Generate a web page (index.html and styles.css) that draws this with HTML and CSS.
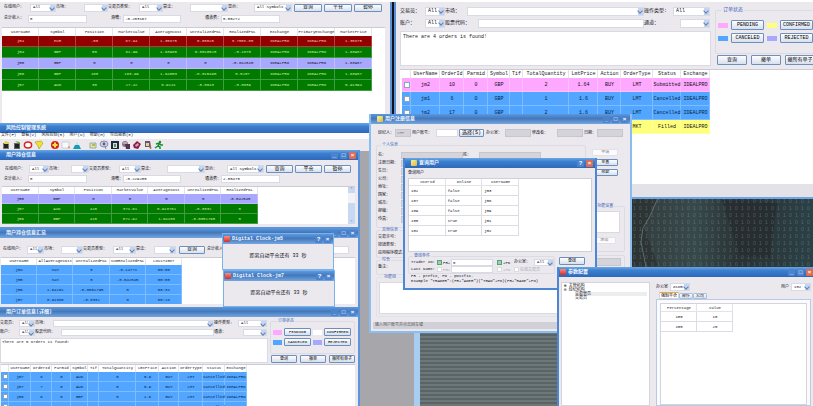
FILE: index.html
```html
<!DOCTYPE html>
<html lang="zh-CN">
<head>
<meta charset="utf-8">
<title>风险控制管理系统</title>
<link rel="stylesheet" href="styles.css">
</head>
<body>
<main class="desktop">
  <svg class="wallpaper" aria-hidden="true">
    <defs>
      <pattern id="bits" width="24" height="14" patternUnits="userSpaceOnUse">
        <g fill="#8fa5a5" opacity=".38" font-family="Liberation Sans" font-size="5">
          <text x="1" y="5">0</text><text x="7" y="5">1</text><text x="13" y="5">0</text><text x="19" y="5">1</text>
          <text x="1" y="12">1</text><text x="7" y="12">0</text><text x="13" y="12">1</text><text x="19" y="12">0</text>
        </g>
      </pattern>
      <linearGradient id="deep" x2="1"><stop offset="0" stop-color="#343c3d"/><stop offset=".35" stop-color="#37494b"/><stop offset=".6" stop-color="#293235"/><stop offset="1" stop-color="#2b4146"/></linearGradient>
    </defs>
    <rect width="100%" height="100%" fill="url(#deep)"/>
    <path d="M90 2 L145 5 L138 60 L108 58 Z" fill="#262b2e" opacity=".7"/>
    <path d="M0 0H25L12 30L26 68H0Z" fill="#2b3031" opacity=".7"/>
    <path d="M26 0L18 18L11 30L9 44L14 69" fill="none" stroke="#5d6a6b" stroke-width="1"/>
    <rect width="100%" height="100%" fill="url(#bits)"/>
  </svg>
  <div class="scanlines"></div>

  <section class="win monitor">
    <div class="body">
      <div class="bar monitor-bar">
        <label for="a1">在线用户：</label><span class="sel"><select id="a1"><option>All</option></select></span>
        <label for="a2">市场：</label><span class="sel"><select id="a2"><option></option></select></span>
        <label for="a3">交易员类型：</label><span class="sel"><select id="a3"><option>All</option></select></span>
        <label for="a4">算法：</label><span class="sel"><select id="a4"><option></option></select></span>
        <label for="a5">显示：</label><span class="sel"><select id="a5"><option>All Symbols</option></select></span>
        <button>查询</button><button>平仓</button><button>暂停</button>
      </div>
      <div class="bar sums">
        <label for="a6">总计收入：</label><input id="a6" value="0">
        <label for="a7">滑嘴：</label><input id="a7" value="-0.203167">
        <label for="a8">通道费：</label><input id="a8" value="5.55272">
      </div>
      <div class="sheet">
        <table class="grid even10">
          <thead><tr><th>UserName</th><th>Symbol</th><th>Position</th><th>MarketValue</th><th>AverageCost</th><th>UnrealizedPNL</th><th>RealizedPNL</th><th>Exchange</th><th>PrimaryExchange</th><th>MarketPrice</th></tr></thead>
          <tbody>
            <tr class="red"><td>jm4</td><td>EUR</td><td>-50</td><td>67.94</td><td>1.35875</td><td>0.00025</td><td>3.755e-05</td><td>IDEALPRO</td><td>IDEALPRO</td><td>1.35875</td></tr>
            <tr class="green"><td>jm4</td><td>GBP</td><td>50</td><td>81.99</td><td>1.63985</td><td>0.0010025</td><td>-0.1875</td><td>IDEALPRO</td><td>IDEALPRO</td><td>1.63987</td></tr>
            <tr class="lilac"><td>jm5</td><td>GBP</td><td>0</td><td>0</td><td>0</td><td>0</td><td>-0.042545</td><td>IDEALPRO</td><td>IDEALPRO</td><td>1.63987</td></tr>
            <tr class="green"><td>jm6</td><td>GBP</td><td>100</td><td>163.99</td><td>1.64003</td><td>-0.015495</td><td>0.0207</td><td>IDEALPRO</td><td>IDEALPRO</td><td>1.63987</td></tr>
            <tr class="green"><td>jm7</td><td>AUD</td><td>30</td><td>27.42</td><td>0.9141</td><td>-0.0043</td><td>-0.0039</td><td>IDEALPRO</td><td>IDEALPRO</td><td>0.91394</td></tr>
          </tbody>
        </table>
      </div>
    </div>
  </section>

  <section class="win orders-top">
    <div class="orders-head">
      <div class="orders-form">
        <div class="bar f1"><label for="b1">交易员：</label><span class="sel"><select id="b1"><option>All</option></select></span><label for="b2">市场：</label><span class="sel"><select id="b2"><option></option></select></span><label for="b3">操作类型:</label><span class="sel"><select id="b3"><option>All</option></select></span></div>
        <div class="bar f2"><label for="b4">账户：</label><span class="sel"><select id="b4"><option>All</option></select></span><label for="b5">股票代码：</label><input id="b5"><label for="b6">通道：</label><span class="sel"><select id="b6"><option></option></select></span></div>
        <textarea aria-label="消息" readonly>There are 4 orders is found!</textarea>
      </div>
      <div class="orders-side">
        <fieldset class="status"><legend>订单状态</legend>
          <div class="keys"><i class="pink"></i><button>PENDING</button><i class="yellow"></i><button>CONFIRMED</button><i class="blue"></i><button>CANCELED</button><i class="lilac"></i><button>REJECTED</button></div>
        </fieldset>
        <div class="acts"><button>查询</button><button>撤单</button><button>撤所有单子</button></div>
      </div>
    </div>
    <div class="sheet">
      <table class="grid orders">
        <colgroup><col class="c1"><col class="c2"><col class="c3"><col class="c4"><col class="c5"><col class="c6"><col class="c7"><col class="c8"><col class="c9"><col class="c10"><col class="c11"><col class="c12"></colgroup>
        <thead><tr><th></th><th>UserName</th><th>OrderId</th><th>Parmid</th><th>Symbol</th><th>Tif</th><th>TotalQuantity</th><th>LmtPrice</th><th>Action</th><th>OrderType</th><th>Status</th><th>Exchange</th></tr></thead>
        <tbody>
          <tr class="pink"><td><input type="checkbox" aria-label="订单 10"></td><td>jm2</td><td>10</td><td>0</td><td>GBP</td><td></td><td>2</td><td>1.64</td><td>BUY</td><td>LMT</td><td>Submitted</td><td>IDEALPRO</td></tr>
          <tr class="blue"><td><input type="checkbox" aria-label="订单 6"></td><td>jm1</td><td>6</td><td>0</td><td>GBP</td><td></td><td>1</td><td>1.6</td><td>BUY</td><td>LMT</td><td>Cancelled</td><td>IDEALPRO</td></tr>
          <tr class="blue"><td><input type="checkbox" aria-label="订单 17"></td><td>jm2</td><td>17</td><td>0</td><td>GBP</td><td></td><td>2</td><td>1.6</td><td>BUY</td><td>LMT</td><td>Cancelled</td><td>IDEALPRO</td></tr>
          <tr class="yellow"><td><input type="checkbox" aria-label="订单 9"></td><td>jm1</td><td>9</td><td>0</td><td>GBP</td><td></td><td>1</td><td>0</td><td>BUY</td><td>MKT</td><td>Filled</td><td>IDEALPRO</td></tr>
        </tbody>
      </table>
    </div>
    <div class="footer"></div>
  </section>

  <section class="win app">
    <h1 class="title">风险控制管理系统</h1>
    <nav class="menu"><a href="#">文件(F)</a><a href="#">查看(V)</a><a href="#">风险控制(R)</a><a href="#">用户(U)</a><a href="#">帮助(H)</a><a href="#">导出报表(E)</a></nav>
    <div class="tools">
      <svg viewBox="0 0 10 10"><path d="M2 3h6v6H2z" fill="#777"/><path d="M3 4h4v4H3z" fill="#222"/><path d="M4 1l4 1v2H3z" fill="#e0cf56"/></svg>
      <svg viewBox="0 0 10 10"><path d="M2 3h6v6H2z" fill="#666"/><path d="M3 4h4v4H3z" fill="#222"/><path d="M3 1l5 1-1 2z" fill="#69b52b"/></svg>
      <svg viewBox="0 0 10 10"><ellipse cx="5" cy="5" rx="3.6" ry="3" fill="#fff" stroke="#e32020" stroke-width="1.5"/></svg>
      <svg viewBox="0 0 10 10"><path d="M1 2l6-1 2 2-4 6-1-3z" fill="#f4e524" stroke="#9c9630" stroke-width=".6"/></svg>
      <svg class="gap" viewBox="0 0 10 10"><circle cx="5" cy="5" r="4" fill="#d52218"/><path d="M5 2.5v5M2.5 5h5" stroke="#ffe34d" stroke-width="2"/></svg>
      <svg viewBox="0 0 10 10"><path d="M1 2h7v6H1z" fill="#fafafa" stroke="#b9b9c5" stroke-width=".6"/><path d="M7 6l2 1-1 2z" fill="#ce7b48"/></svg>
      <svg viewBox="0 0 10 10"><path d="M1 9l2-4h4l2 4z" fill="#159ab8"/><path d="M3 5l2-3 2 3z" fill="#bfe3ee"/></svg>
      <svg class="gap" viewBox="0 0 10 10"><path d="M2 3h6v5H2z" fill="#efe48b" stroke="#829bb0" stroke-width=".8"/><path d="M4 5h3" stroke="#658f4d"/></svg>
      <svg viewBox="0 0 10 10"><ellipse cx="5" cy="4" rx="4" ry="3" fill="#cad2ed" stroke="#767c9a" stroke-width=".8"/><circle cx="5" cy="4" r="1.4" fill="#575d8b"/><path d="M6 6l1 3" stroke="#888"/></svg>
      <svg viewBox="0 0 10 10"><path d="M1 1h8v8H1z" fill="#1c2849"/><path d="M3 3h4v5H3z" fill="#d8e0b8"/><path d="M4 4h2v3H4z" fill="#6b8a74"/></svg>
      <svg viewBox="0 0 10 10"><circle cx="4" cy="4" r="3" fill="#8d7086"/><path d="M4 4l5 0v5H5z" fill="#513453"/><path d="M2 3h4" stroke="#e3d9e2"/></svg>
      <svg viewBox="0 0 10 10"><path d="M1 5l4-4 4 3-3 5-4-1z" fill="#8b1c3f"/><path d="M3 5l3-2 1 2-3 2z" fill="#d7a0c8"/></svg>
      <svg viewBox="0 0 10 10"><path d="M2 1h5l1 6H2z" fill="#675280"/><path d="M3 3h3v3H3z" fill="#e8d769"/><path d="M6 6l3 2-2 1z" fill="#b3602a"/></svg>
      <svg viewBox="0 0 10 10"><circle cx="6" cy="2" r="1.2" fill="#16902b"/><path d="M2 4l3-1 2 2h2M5 4L4 6l2 1v2M4 6L1 8" fill="none" stroke="#16902b" stroke-width="1.5"/></svg>
    </div>
    <div class="mdi"></div>
  </section>

  <section class="win position">
    <h2 class="title"><span>用户持仓信息</span><span class="ctl"><button aria-label="最小化">_</button><button aria-label="最大化">□</button><button class="x" aria-label="关闭">×</button></span></h2>
    <div class="body">
      <div class="bar position-bar">
        <label for="c1">在线用户：</label><span class="sel"><select id="c1"><option>All</option></select></span>
        <label for="c2">市场：</label><span class="sel"><select id="c2"><option></option></select></span>
        <label for="c3">交易员类型：</label><span class="sel"><select id="c3"><option>All</option></select></span>
        <label for="c4">算法：</label><span class="sel"><select id="c4"><option></option></select></span>
        <label for="c5">显示：</label><span class="sel"><select id="c5"><option>All Symbols</option></select></span>
        <button>查询</button><button>平仓</button><button>暂停</button>
      </div>
      <div class="bar sums">
        <label for="c6">总计收入：</label><input id="c6" value="0">
        <label for="c7">滑嘴：</label><input id="c7" value="-0.229255">
        <label for="c8">通道费：</label><input id="c8" value="2.55475">
      </div>
      <div class="sheet scrolled">
        <table class="grid even7">
          <thead><tr><th>UserName</th><th>Symbol</th><th>Position</th><th>MarketValue</th><th>AverageCost</th><th>UnrealizedPNL</th><th>RealizedPNL</th></tr></thead>
          <tbody>
            <tr class="lilac"><td>jm5</td><td>GBP</td><td>0</td><td>0</td><td>0</td><td>0</td><td>-0.042545</td></tr>
            <tr class="green"><td>jm7</td><td>AUD</td><td>410</td><td>374.61</td><td>0.913761</td><td>-0.0332</td><td>0</td></tr>
            <tr class="green"><td>jm6</td><td>GBP</td><td>410</td><td>672.92</td><td>1.64103</td><td>-0.0052795</td><td>0</td></tr>
          </tbody>
        </table>
        <div class="scrollbar"><b>⌃</b><i></i><b>⌄</b></div>
      </div>
    </div>
  </section>

  <section class="win summary">
    <h2 class="title"><span>用户持仓信息汇总</span><span class="ctl"><button aria-label="最小化">_</button><button aria-label="最大化">□</button><button aria-label="关闭">×</button></span></h2>
    <div class="body">
      <div class="bar summary-bar">
        <label for="d1">在线用户：</label><span class="sel"><select id="d1"><option>All</option></select></span>
        <label for="d2">市场：</label><span class="sel"><select id="d2"><option></option></select></span>
        <label for="d3">交易员类型：</label><span class="sel"><select id="d3"><option>All</option></select></span>
        <label for="d4">算法：</label><span class="sel"><select id="d4"><option></option></select></span>
        <button>查询</button><label for="d5">总计收入：</label><input id="d5">
      </div>
      <div class="sheet">
        <table class="grid even5">
          <thead><tr><th>UserName</th><th>AllAverageCost</th><th>UnrealizedPNL</th><th>SumRealizedPNL</th><th>LossTimer</th></tr></thead>
          <tbody>
            <tr class="blue"><td>jm4</td><td>nan</td><td>0</td><td>-0.14771</td><td>00:00</td></tr>
            <tr class="blue"><td>jm5</td><td>nan</td><td>0</td><td>-0.042545</td><td>00:00</td></tr>
            <tr class="blue"><td>jm6</td><td>1.64102</td><td>-0.0052795</td><td>0</td><td>00:34</td></tr>
            <tr class="blue"><td>jm7</td><td>0.91366</td><td>-0.0332</td><td>0</td><td>00:28</td></tr>
          </tbody>
        </table>
      </div>
    </div>
  </section>

  <section class="win clock clock-a">
    <h2 class="title"><i class="badge"></i><span>Digital Clock-jm5</span><span class="ctl"><button aria-label="帮助">?</button><button aria-label="关闭">×</button></span></h2>
    <p>距离自动平仓还有 33 秒</p>
  </section>
  <section class="win clock clock-b">
    <h2 class="title"><i class="badge"></i><span>Digital Clock-jm7</span><span class="ctl"><button aria-label="帮助">?</button><button aria-label="关闭">×</button></span></h2>
    <p>距离自动平仓还有 33 秒</p>
  </section>

  <section class="win orders-low">
    <h2 class="title"><span>用户订单信息(详细)</span><span class="ctl"><button aria-label="最小化">_</button><button aria-label="最大化">□</button><button aria-label="关闭">×</button></span></h2>
    <div class="orders-head">
      <div class="orders-form">
        <div class="bar f1"><label for="e1">交易员：</label><span class="sel"><select id="e1"><option>All</option></select></span><label for="e2">市场：</label><span class="sel"><select id="e2"><option></option></select></span><label for="e3">操作类型:</label><span class="sel"><select id="e3"><option>All</option></select></span></div>
        <div class="bar f2"><label for="e4">账户：</label><span class="sel"><select id="e4"><option>All</option></select></span><label for="e5">股票代码：</label><input id="e5"><label for="e6">通道：</label><span class="sel"><select id="e6"><option></option></select></span></div>
        <textarea aria-label="消息" readonly>There are 5 orders is found!</textarea>
      </div>
      <div class="orders-side">
        <fieldset class="status"><legend>订单状态</legend>
          <div class="keys"><i class="pink"></i><button>PENDING</button><i class="white"></i><button>CONFIRMED</button><i class="blue"></i><button>CANCELED</button><i class="lilac"></i><button>REJECTED</button></div>
        </fieldset>
        <div class="acts"><button>查询</button><button>撤单</button><button>撤所有单子</button></div>
      </div>
    </div>
    <div class="sheet">
      <table class="grid orders">
        <colgroup><col class="c1"><col class="c2"><col class="c3"><col class="c4"><col class="c5"><col class="c6"><col class="c7"><col class="c8"><col class="c9"><col class="c10"><col class="c11"><col class="c12"></colgroup>
        <thead><tr><th></th><th>UserName</th><th>OrderId</th><th>Parmid</th><th>Symbol</th><th>Tif</th><th>TotalQuantity</th><th>LmtPrice</th><th>Action</th><th>OrderType</th><th>Status</th><th>Exchange</th></tr></thead>
        <tbody>
          <tr class="blue"><td><input type="checkbox" aria-label="订单 8"></td><td>jm7</td><td>8</td><td>0</td><td>AUD</td><td></td><td>5</td><td>0.9</td><td>BUY</td><td>LMT</td><td>Cancelled</td><td>IDEALPRO</td></tr>
          <tr class="blue"><td><input type="checkbox" aria-label="订单 7"></td><td>jm7</td><td>7</td><td>0</td><td>AUD</td><td></td><td>5</td><td>0.9</td><td>BUY</td><td>LMT</td><td>Cancelled</td><td>IDEALPRO</td></tr>
          <tr class="blue"><td><input type="checkbox" aria-label="订单 6"></td><td>jm6</td><td>6</td><td>0</td><td>GBP</td><td></td><td>5</td><td>1.6</td><td>BUY</td><td>LMT</td><td>Cancelled</td><td>IDEALPRO</td></tr>
          <tr class="blue"><td><input type="checkbox" aria-label="订单 5"></td><td>jm5</td><td>5</td><td>0</td><td>GBP</td><td></td><td>5</td><td>1.6</td><td>BUY</td><td>LMT</td><td>Cancelled</td><td>IDEALPRO</td></tr>
        </tbody>
      </table>
    </div>
  </section>

  <section class="win register">
    <h2 class="title"><i class="badge gold"></i><span>用户注册信息</span><span class="ctl"><button aria-label="最小化">_</button><button aria-label="最大化">□</button><button aria-label="关闭">×</button></span></h2>
    <div class="bar register-bar">
      <label for="g1">经纪人：</label><input id="g1" value="SHF" disabled><label for="g2">用户账号：</label><input id="g2"><button>选择(S)</button><label for="g3">办公室：</label><input id="g3" disabled><label for="g4">修改者：</label><input id="g4" disabled><label for="g5">日期：</label><input id="g5" disabled>
    </div>
    <div class="register-main">
      <div class="register-form">
        <fieldset><legend>个人信息</legend>
          <div class="person">
            <label for="h1">名：</label><input id="h1" disabled><label for="h2">姓：</label><input id="h2" disabled>
            <label for="h3">注册日期：</label><input id="h3" class="span" disabled>
            <label for="h4">生日：</label><input id="h4" class="span" disabled>
            <label for="h5">公司：</label><input id="h5" class="span" disabled>
            <label for="h6">地址：</label><input id="h6" class="span" disabled>
            <label for="h7">国家：</label><input id="h7" class="span" disabled>
            <label for="h8">城市：</label><input id="h8" class="span" disabled>
            <label for="h9">邮编：</label><input id="h9" class="span" disabled>
            <label for="h10">传真：</label><input id="h10" class="span" disabled>
          </div>
        </fieldset>
        <fieldset><legend>其他信息</legend><p>交易许可：</p><p>按钮类型：</p><p>应用程序模式：</p></fieldset>
        <fieldset class="general"><legend>综合</legend><p>备注：</p></fieldset>
      </div>
      <div class="register-side">
        <button disabled>申请</button><button>重置</button><button>帮助</button>
        <fieldset><legend>功能设置</legend><div class="well"></div><button disabled>添加</button></fieldset>
        <fieldset class="tail"><input aria-label="数值" disabled></fieldset>
      </div>
    </div>
    <fieldset class="groups"><legend>功能组</legend><div class="well"></div></fieldset>
    <footer>输入用户账号并点击回车键</footer>
  </section>

  <section class="win query">
    <h2 class="title"><i class="badge gold"></i><span>查询用户</span><span class="ctl"><button aria-label="帮助">?</button><button class="x" aria-label="关闭">×</button></span></h2>
    <p class="caption">查询用户</p>
    <div class="sheet">
      <table class="grid plain">
        <thead><tr><th>userId</th><th>online</th><th>userName</th></tr></thead>
        <tbody>
          <tr><td>102</td><td>false</td><td>jm3</td></tr>
          <tr><td>107</td><td>false</td><td>jm8</td></tr>
          <tr><td>109</td><td>false</td><td>jm9</td></tr>
          <tr><td>100</td><td>true</td><td>jm1</td></tr>
          <tr><td>101</td><td>true</td><td>jm2</td></tr>
        </tbody>
      </table>
    </div>
    <div class="query-foot">
      <fieldset><legend>查找条件</legend>
        <div class="criteria">
          <label for="k1">Trader ID:</label><label class="tick"><input type="checkbox" checked>PR+</label><input id="k1" value="0"><label class="tick"><input type="checkbox" checked>+PO</label><label for="k2">办公室：</label><span class="sel"><select id="k2"><option>All</option></select></span>
          <label for="k3">Last Name:</label><label class="tick off"><input type="checkbox" disabled>PR+</label><input id="k3"><label class="tick off"><input type="checkbox" disabled>+PO</label><label class="tick off wide"><input type="checkbox" disabled>在线交易员</label>
        </div>
      </fieldset>
      <button>查找</button>
    </div>
    <p class="hint">PR - prefix, PO - postfix.<br>Example "TRADER":(PR+"ADER")("TRAD"+PO)(PR+"RADE"+PO)</p>
  </section>

  <section class="win config">
    <h2 class="title"><i class="badge"></i><span>参数配置</span><span class="ctl"><button aria-label="最小化">_</button><button aria-label="最大化">□</button><button class="x" aria-label="关闭">×</button></span></h2>
    <div class="config-main">
      <ul class="tree"><li>⊞ 主管机构</li><li>⊟ 经纪机构</li><li class="leaf on">交易管员</li><li class="leaf">交易员</li></ul>
      <div class="config-side">
        <div class="config-bar"><label for="m1">办公室</label><span class="sel"><select id="m1"><option>Zcom</option></select></span><label class="right" for="m2">用户</label><span class="sel"><select id="m2"><option>102</option></select></span></div>
        <div class="tabs"><button class="on">强制平仓</button><button>邮件</button><button>公司</button></div>
        <div class="pane"><div class="sheet">
          <table class="grid plain values">
            <thead><tr><th>Percentage</th><th>Value</th></tr></thead>
            <tbody><tr><td>100</td><td>10</td></tr><tr><td>150</td><td>20</td></tr></tbody>
          </table>
        </div></div>
      </div>
    </div>
  </section>
</main>
</body>
</html>
```
FILE: styles.css
```css
* { box-sizing: border-box; }
html, body { height: 100%; margin: 0; background: #fff; }
body, button, input, select, textarea {
  font: 4px/5px "Liberation Mono", "Noto Sans CJK SC", monospace;
  color: #101018;
}
h1, h2, p, ul, fieldset { margin: 0; padding: 0; }
.desktop { position: relative; width: 100%; height: 100vh; overflow: hidden; white-space: nowrap; }

/* Controls */
button, input, select, textarea { margin: 0; padding: 0; border-radius: 0; min-width: 0; }
button {
  height: 8px; overflow: hidden; text-align: center;
  border: 1px solid #6d8fba; border-radius: 1px;
  background: linear-gradient(#fdfdff, #d6e0ef); color: #000;
}
.bar button, .acts button { font-size: 5px; }
button:disabled { background: #fbfbfd; border-color: #e2e1e8; color: #777; }
input, select, textarea { border: 1px solid #d9dbe4; background: #fff; }
input { height: 8px; padding: 0 1px; width: 100%; }
input:disabled { background: #d5d4da; border-color: #c6c6ce; color: #888; }
input[type="checkbox"] {
  appearance: none; display: inline-block; width: 6px; height: 6px; padding: 0;
  border: 1px solid #8ca5bd; background: #fff; vertical-align: middle;
}
input[type="checkbox"]:checked { border-color: #5da178; background: #9bd2ac; }
input[type="checkbox"]:disabled { border-color: #dcdce3; }
.sel { position: relative; display: block; height: 8px; min-width: 0; }
.sel select { appearance: none; display: block; width: 100%; height: 100%; padding: 0 6px 0 2px; }
.sel::after {
  content: ""; position: absolute; top: 1px; right: 1px; bottom: 1px; width: 5px;
  background: #c2d5f2;
}
.sel::before {
  content: ""; position: absolute; z-index: 1; top: 2px; right: 2px; width: 3px; height: 3px;
  border: solid #6681ab; border-width: 0 1px 1px 0; transform: rotate(45deg);
}
textarea { display: block; width: 100%; resize: none; overflow: hidden; padding: 1px; color: #222; }
fieldset { border: 1px solid #dcdae3; border-radius: 2px; min-width: 0; }
legend { margin-left: 4px; padding: 0 1px; color: #3c64b8; line-height: 5px; }
.bar { display: grid; align-items: center; height: 11px; }

/* Windows */
.win { position: absolute; display: flex; flex-direction: column; overflow: hidden; background: #ebe9ee; }
.title {
  display: flex; align-items: center; gap: 2px; flex: none; height: 10px; padding: 0 2px 0 6px;
  font-size: 5px; line-height: 8px; font-weight: bold; color: #f2f7ff;
  background: linear-gradient(#6aa7e4, #3b7fcf 35%, #2d67ba);
}
.ctl { display: flex; gap: 2px; margin-left: auto; }
.ctl button { width: 7px; height: 7px; border: 0; background: #4c83cf; color: #fff; font: bold 6px/6px "Liberation Sans", sans-serif; }
.ctl .x { background: #df6c52; }
.badge { width: 6px; height: 6px; border-radius: 1px; background: linear-gradient(#ff8a80, #cf2f2a); }
.badge.gold { background: linear-gradient(135deg, #fff39a, #d9b73b); }
.body { display: flex; flex-direction: column; flex: 1; min-height: 0; }
.sheet { flex: 1; min-height: 0; background: #fff; border-top: 1px solid #cccbd3; overflow: hidden; }

/* Tables */
.grid { border-spacing: 0; table-layout: fixed; text-align: center; }
.grid th, .grid td { padding: 0; }
.grid th { font-weight: normal; color: #222; box-shadow: inset -1px 0 #e6e6ea; }
.grid td { box-shadow: inset -1px -1px rgba(255, 255, 255, .25); }
.red { background: #940000; color: #f8c4ba; }
.green { background: #007b00; color: #cdf09a; }
.lilac { background: #a9a8ff; }
.blue { background: #52a6ff; color: #06244a; }
.pink { background: #ffa8ff; }
.yellow { background: #ffff7e; }
.white { background: #fff; }

/* Wallpaper */
.wallpaper { position: absolute; left: 632px; right: 0; top: 198px; width: calc(100% - 632px); height: 70px; }
.scanlines {
  position: absolute; left: 420px; top: 332px; width: 138px; bottom: 0;
  background: repeating-linear-gradient(#6d7778 0 2px, #596466 2px 4px);
}

/* Monitor */
.monitor { left: 0; top: 2px; width: 392px; height: 122px; border-right: 2px solid #5b8fd6; }
.monitor-bar { grid-template-columns: 26px 26px 28px 24px 31px 24px 27px 38px 26px 38px 30px 30px 30px; padding-left: 4px; }
.monitor-bar button, .position-bar button { margin-left: 2px; }
.sums { grid-template-columns: 24px 59px 36px 58px 40px 59px; padding-left: 4px; }
.sums label:nth-of-type(n+2) { text-align: right; }
.monitor .sums { margin-bottom: 3px; }
.monitor .sheet { margin: 0 5px 0 2px; }
.monitor thead tr { height: 8px; }
.monitor tbody tr { height: 11px; }
.even10 { width: 370px; }

/* Orders */
.orders-head { display: flex; flex: none; }
.orders-form { flex: none; }
.orders-side { flex: none; }
.status .keys { display: grid; align-items: center; }
.acts { display: grid; }
.orders-top {
  left: 394px; right: 0; top: 2px; height: 197px; padding-left: 4px;
  border-left: 2px solid #5b8fd6; border-bottom: 2px solid #6ba6e6;
  box-shadow: -2px 0 #10131c;
}
.orders-top label, .orders-top legend, .orders-top .grid, .orders-top textarea,
.orders-top select, .orders-top button { font-size: 5px; line-height: 6px; }
.orders-top .orders-head { height: 67px; padding-top: 3px; }
.orders-top .orders-form { width: 311px; }
.orders-top .bar { height: 12px; }
.orders-top .sel, .orders-top .bar input { height: 9px; }
.orders-top .f1 { grid-template-columns: 25px 20px 22px 177px 29px 37px; }
.orders-top .f2 { grid-template-columns: 25px 20px 33px 166px 36px 30px; }
.orders-top textarea { height: 35px; margin-top: 2px; padding: 2px; }
.orders-top .orders-side { width: 104px; padding: 2px 0 0 4px; }
.orders-top .status { height: 47px; padding: 7px 2px 0; }
.orders-top .keys { grid-template-columns: 10px 33px 10px 33px; gap: 3px; }
.orders-top .keys button, .orders-top .acts button { height: 10px; }
.keys i { height: 5px; }
.orders-top .acts { grid-template-columns: repeat(3, 30px); gap: 4px; padding: 1px 0 0 2px; }
.orders-top thead tr { height: 8px; }
.orders-top tbody tr { height: 14px; }
.orders-top .grid { width: 308px; }
.orders-top .sheet { padding-left: 2px; }
.orders-top .c1 { width: 9px; }
.orders-top .c2 { width: 29px; }
.orders-top .c3 { width: 24px; }
.orders-top .c4 { width: 24px; }
.orders-top .c5 { width: 22px; }
.orders-top .c6 { width: 13px; }
.orders-top .c7 { width: 46px; }
.orders-top .c8 { width: 29px; }
.orders-top .c9 { width: 23px; }
.orders-top .c10 { width: 32px; }
.orders-top .c11 { width: 28px; }
.orders-top .c12 { width: 29px; }
.footer { flex: none; height: 13px; background: #e4e2e9; }

/* Application frame */
.app { left: 0; top: 123px; width: 420px; bottom: 0; border-right: 6px solid #a9cdf0; }
.menu { display: flex; gap: 5px; flex: none; height: 6px; padding-left: 1px; background: #fcfcfd; }
.menu a { color: #222; text-decoration: none; }
.tools { display: flex; align-items: center; gap: 1px; flex: none; height: 12px; padding-left: 1px; }
.tools svg { width: 10px; height: 10px; }
.tools .gap { margin-left: 5px; }
.mdi { flex: 1; background: #a7a6ab; }

.position, .summary, .orders-low { border-right: 2px solid #5b93dc; }
.position { left: 0; top: 150px; width: 360px; height: 78px; border-bottom: 1px solid #5b93dc; }
.position .body { padding-top: 4px; }
.position .bar { height: 10px; }
.position-bar { grid-template-columns: 24px 20px 22px 18px 30px 22px 26px 38px 22px 37px 29px 29px 29px; padding-left: 5px; }
.position .sums { margin-bottom: 2px; }
.position .sheet { margin: 0 3px 3px 2px; }
.position thead tr { height: 7px; }
.position tbody tr { height: 10px; }
.even7 { width: 256px; }
.scrolled { display: flex; justify-content: space-between; align-items: flex-start; }
.scrollbar { display: flex; flex-direction: column; align-self: stretch; width: 7px; background: #f1f2f8; color: #46638f; }
.scrollbar b { height: 6px; background: #c7d8f3; text-align: center; }
.scrollbar i { flex: 1; margin-top: 10px; background: #c7d8f3; }

.summary .title, .orders-low .title, .clock .title, .register .title {
  background: linear-gradient(#5c99dc, #4478bd 45%, #75a6de);
}
.summary { left: 0; top: 228px; width: 360px; height: 79px; }
.summary .body { padding-top: 4px; }
.summary .bar { height: 15px; }
.summary-bar { grid-template-columns: 24px 17px 17px 22px 30px 23px 18px 22px 31px 26px 116px; padding-left: 3px; }
.summary-bar button { margin: 0 2px 0 3px; }
.summary .sheet { margin: 0 3px 3px 1px; }
.summary thead tr { height: 7px; }
.summary tbody tr { height: 10px; }
.even5 { width: 181px; }

.clock { width: 112px; height: 37px; border: 1px solid #79b2ea; }
.clock-a { left: 222px; top: 233px; }
.clock-b { left: 223px; top: 270px; }
.clock .title { padding-left: 1px; }
.clock p { margin: auto; font-size: 5px; }

.orders-low { left: 0; top: 307px; width: 360px; bottom: 0; }
.orders-low .orders-head { height: 47px; padding-top: 2px; }
.orders-low .orders-form { width: 268px; }
.orders-low .bar { height: 9px; }
.orders-low .sel, .orders-low .bar input { height: 7px; }
.orders-low .f1 { grid-template-columns: 19px 16px 18px 161px 24px 29px; }
.orders-low .f2 { grid-template-columns: 19px 16px 26px 153px 29px 24px; }
.orders-low textarea { height: 25px; margin-top: 1px; }
.orders-low .orders-side { width: 87px; padding-left: 2px; }
.orders-low .status { height: 35px; padding: 4px 2px 0; }
.orders-low .keys { grid-template-columns: 9px 27px 9px 27px; gap: 2px; }
.orders-low .acts { grid-template-columns: repeat(3, 26px); gap: 3px; padding: 1px 0 0 1px; }
.orders-low .acts button { font-size: 4px; }
.orders-low .sheet { margin: 0 3px 0 1px; }
.orders-low thead tr { height: 7px; }
.orders-low tbody tr { height: 10px; }
.orders-low .grid { width: 246px; }
.orders-low input[type="checkbox"] { width: 5px; height: 5px; }
.orders-low .c1 { width: 8px; }
.orders-low .c2 { width: 22px; }
.orders-low .c3 { width: 21px; }
.orders-low .c4 { width: 19px; }
.orders-low .c5 { width: 17px; }
.orders-low .c6 { width: 11px; }
.orders-low .c7 { width: 37px; }
.orders-low .c8 { width: 23px; }
.orders-low .c9 { width: 20px; }
.orders-low .c10 { width: 24px; }
.orders-low .c11 { width: 22px; }
.orders-low .c12 { width: 22px; }

/* Registration */
.register { left: 369px; top: 114px; width: 263px; height: 219px; border: 2px solid #8cbdf0; border-top: 0; }
.register-bar { grid-template-columns: 18px 16px 25px 22px 27px 20px 26px 26px 26px 14px 26px; padding-left: 6px; height: 18px; flex: none; }
.register-bar button { margin: 0 1px; }
.register-bar label { padding-left: 1px; }
.register-main { display: flex; gap: 2px; padding: 0 5px; flex: none; margin-top: 1px; }
.register-form { width: 212px; }
.person { display: grid; grid-template-columns: 23px 62px 16px 62px; row-gap: 1px; padding: 4px 0 4px 1px; align-items: center; }
.person input { height: 7px; }
.person .span { grid-column: 2 / -1; }
.register-form p { line-height: 8px; padding-left: 1px; }
.general { padding-bottom: 3px; }
.register-side { display: flex; flex-direction: column; gap: 3px; width: 37px; padding-top: 6px; }
.register-side > button { width: 26px; height: 7px; margin-left: 4px; }
.register-side fieldset { padding: 2px 3px; }
.register-side fieldset:not(.tail) { margin-top: 25px; height: 48px; }
.register-side .well { height: 22px; margin: 0 1px 4px; }
.register-side fieldset button { width: 24px; height: 7px; }
.well { background: #fff; border: 1px solid #d9d9e0; }
.groups { flex: 1; margin: 0 5px 5px; padding: 2px; border-color: #e2e0e8; }
.groups .well { height: 100%; }
.register footer { flex: none; height: 7px; margin: 0 2px 2px; padding-left: 2px; line-height: 7px; background: #d1d0d6; color: #555; }

/* User search */
.query { left: 403px; top: 158px; width: 194px; height: 132px; border: 2px solid #4d86d4; border-top: 0; }
.query .caption { padding: 2px 3px 1px; line-height: 7px; }
.query .sheet { flex: none; height: 74px; margin: 0 3px; border: 1px solid #d0d0d8; }
.plain th { box-shadow: inset -1px -1px #e2e2e8; }
.plain td { box-shadow: inset -1px -1px #dcdce2; }
.query .grid { width: 110px; }
.query td { text-align: left; padding-left: 2px; }
.query thead tr { height: 7px; }
.query tbody tr { height: 10px; }
.query-foot { display: flex; align-items: flex-start; gap: 4px; padding: 2px 3px 0; }
.query-foot > button { width: 26px; margin-top: 3px; }
.criteria { display: grid; grid-template-columns: 26px 14px 42px 21px 20px 20px; padding-left: 2px; align-items: center; }
.criteria .sel, .criteria input { height: 7px; }
.criteria input[type="checkbox"] { width: 5px; height: 5px; margin-right: 1px; }
.criteria > :nth-child(4), .criteria > :nth-child(10) { padding-left: 4px; }
.tick.off { color: #aaa9b0; }
.tick.wide { grid-column: 5 / -1; }
.hint { padding-left: 6px; line-height: 5px; }

/* Configuration */
.config { left: 557px; right: 0; top: 267px; bottom: 0; border-left: 2px solid #4d86d4; }
.config .title { padding: 0 0 0 1px; }
.config-main { display: flex; gap: 6px; flex: 1; min-height: 0; padding: 5px 2px 0 2px; }
.tree { width: 89px; padding: 1px 2px; list-style: none; background: #fff; border: 1px solid #d4d4dc; line-height: 4px; }
.tree .leaf { margin-left: 11px; }
.tree .on { background: #ededf0; }
.config-side { display: flex; flex-direction: column; flex: 1; min-width: 0; }
.config-bar { display: flex; align-items: center; height: 10px; gap: 2px; }
.config-bar .sel { width: 20px; }
.config-bar .right { margin-left: auto; }
.tabs { display: flex; align-items: flex-end; padding-left: 3px; height: 7px; }
.tabs button { width: 14px; height: 6px; border-color: #a9c0df; line-height: 4px; }
.tabs .on { width: 20px; height: 7px; border-color: #d4d4dc; border-top-color: #f1a636; background: #fff; }
.pane { display: flex; flex: 1; padding: 3px 3px 0; border: 1px solid #b7cbe6; background: #fbfbfd; }
.pane .sheet { border: 1px solid #d4d4dc; }
.values { width: 72px; }
.values thead tr { height: 8px; }
.values tbody tr { height: 10px; }
```
